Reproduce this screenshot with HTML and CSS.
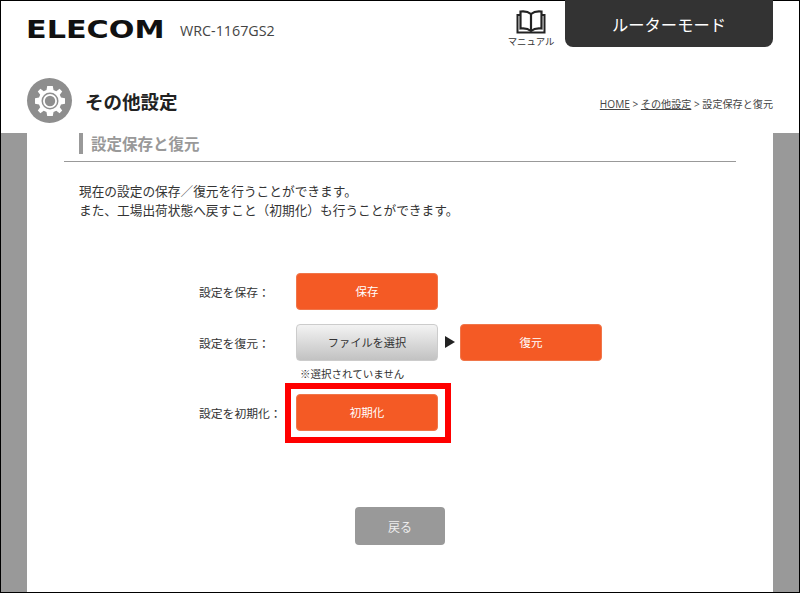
FILE: index.html
```html
<!DOCTYPE html>
<html lang="ja">
<head>
<meta charset="utf-8">
<title>設定保存と復元</title>
<link rel="stylesheet" href="styles.css">
</head>
<body>
<div class="frame">
  <header class="top">
    <div class="brand">
      <span class="logo">ELECOM</span>
      <span class="model">WRC-1167GS2</span>
    </div>
    <div class="top-right">
      <a class="manual">
        <svg class="book" width="30" height="24" viewBox="0 0 30 24" fill="none" stroke="#222" stroke-width="2.200">
          <path d="M15 4C12 1.500 8 1 4.500 1.500V18.500C8 18 12 18.500 15 21C18 18.500 22 18 25.500 18.500V1.500C22 1 18 1.500 15 4Z"/>
          <path d="M15 4V21"/>
          <path d="M4.500 5H1.500V22.500H28.500V5H25.500" stroke-width="2"/>
        </svg>
        <span>マニュアル</span>
      </a>
      <div class="mode">ルーターモード</div>
    </div>
  </header>
  <div class="title-row">
    <div class="title-left">
      <span class="gear">
        <svg width="34" height="34" viewBox="-17 -17 34 34">
          <path fill="#fff" d="M-2.800-15H2.800L3.500-11L6.300-9.800L9.600-12.200L12.200-9.600L9.800-6.300L11-3.500L15-2.800V2.800L11 3.500L9.800 6.300L12.200 9.600L9.600 12.200L6.300 9.800L3.500 11L2.800 15H-2.800L-3.500 11L-6.300 9.800L-9.600 12.200L-12.200 9.600L-9.800 6.300L-11 3.500L-15 2.800V-2.800L-11-3.500L-9.800-6.300L-12.200-9.600L-9.600-12.200L-6.300-9.800L-3.500-11Z"/>
          <circle r="8.500" fill="#8e8e8e"/>
          <circle r="7" fill="#fff"/>
          <circle r="5.200" fill="#8e8e8e"/>
        </svg>
      </span>
      <h1>その他設定</h1>
    </div>
    <nav class="crumbs"><a>HOME</a> &gt; <a>その他設定</a> &gt; 設定保存と復元</nav>
  </div>
  <div class="stage">
    <main class="sheet">
      <div class="section-head"><h2>設定保存と復元</h2></div>
      <p class="lead">現在の設定の保存／復元を行うことができます。<br>また、工場出荷状態へ戻すこと（初期化）も行うことができます。</p>
      <div class="form">
        <div class="row">
          <span class="label">設定を保存：</span>
          <button class="btn orange">保存</button>
        </div>
        <div class="row row-restore">
          <span class="label">設定を復元：</span>
          <button class="btn silver">ファイルを選択</button>
          <span class="arrow"></span>
          <button class="btn orange">復元</button>
        </div>
        <div class="note">※選択されていません</div>
        <div class="row row-init">
          <span class="label">設定を初期化：</span>
          <span class="highlight"><button class="btn orange">初期化</button></span>
        </div>
      </div>
      <div class="back-wrap"><button class="btn back">戻る</button></div>
    </main>
  </div>
</div>
</body>
</html>
```
FILE: styles.css
```css
* { box-sizing: border-box; }
html, body { margin: 0; padding: 0; height: 100%; }
body { font-family: "Noto Sans CJK JP", "Liberation Sans", sans-serif; color: #333; background: #fff; overflow: hidden; }
.frame { width: 800px; height: 593px; border: 1px solid #000; display: flex; flex-direction: column; }
.top { height: 63px; display: flex; justify-content: space-between; padding-left: 25px; padding-right: 26px; flex: none; }
.brand { display: flex; align-items: center; height: 58px; }
.logo { font-family: "DejaVu Sans", sans-serif; font-weight: 700; font-size: 24px; color: #111; width: 154px; transform: scaleX(1.26); transform-origin: left; line-height: 1; }
.model { font-family: "Open Sans", "Liberation Sans", sans-serif; font-size: 14.300px; color: #444; margin-top: 0; }
.top-right { display: flex; align-items: flex-start; gap: 9px; margin-top: -1px; }
.manual { width: 50px; display: flex; flex-direction: column; align-items: center; padding-top: 10px; font-size: 9.400px; color: #333; }
.manual span { margin-top: 1px; line-height: 12px; white-space: nowrap; }
.mode { width: 208px; height: 47px; background: #333; color: #fff; border-radius: 0 0 8px 8px; font-size: 16.300px; display: flex; align-items: center; justify-content: center; }
.title-row { height: 69px; display: flex; justify-content: space-between; align-items: flex-start; padding: 14px 26px 0; flex: none; }
.title-left { display: flex; align-items: center; gap: 13px; }
.gear { width: 45px; height: 45px; border-radius: 50%; background: #8e8e8e; display: flex; align-items: center; justify-content: center; }
h1 { margin: 0; font-size: 18.500px; font-weight: 700; color: #222; }
.crumbs { font-family: "Open Sans", "Noto Sans CJK JP", sans-serif; font-size: 10.100px; color: #444; margin-top: 18px; line-height: 16px; }
.crumbs a { text-decoration: underline; }
.stage { flex: 1; background: #999; padding: 0 26px; min-height: 0; }
.sheet { background: #fff; height: 100%; padding: 0 37px; overflow: hidden; position: relative; }
.section-head { height: 29px; border-bottom: 1px solid #999; padding-left: 15px; }
h2 { margin: 0; font-size: 15.500px; line-height: 20px; height: 21px; font-weight: 700; color: #999; border-left: 4px solid #999; padding-left: 8px; }
.lead { margin: 20px 0 0 15px; font-size: 12.700px; line-height: 18.600px; color: #333; }
.form { margin: 53px 0 0 135px; }
.row { display: flex; align-items: center; height: 38px; }
.row-restore { margin-top: 13px; }
.label { width: 97px; font-size: 11.800px; color: #333; flex: none; white-space: nowrap; }
.btn { border: 0; font-family: inherit; font-size: 11.500px; width: 142px; height: 37px; border-radius: 4px; padding: 0; color: #fff; }
.orange { background: #f45a25; border: 1px solid #f0764a; }
.silver { color: #333; background: linear-gradient(#f3f3f3, #c2c2c2); border: 1px solid #ccc; font-size: 11.200px; }
.arrow { width: 0; height: 0; border-left: 10px solid #222; border-top: 6px solid transparent; border-bottom: 6px solid transparent; margin: 0 5px 0 7px; }
.note { margin-left: 101px; font-size: 10.500px; line-height: 16px; height: 16px; margin-top: 5px; }
.row-init { margin-top: 11px; }
.highlight { display: flex; border: 6px solid #f00; padding: 5px 7px 6px 5px; margin: -11px -13px -12px -11px; }
.back-wrap { display: flex; justify-content: center; margin-top: 76px; }
.back { background: #999; width: 90px; height: 38px; font-size: 12px; color: #eee; }
```
